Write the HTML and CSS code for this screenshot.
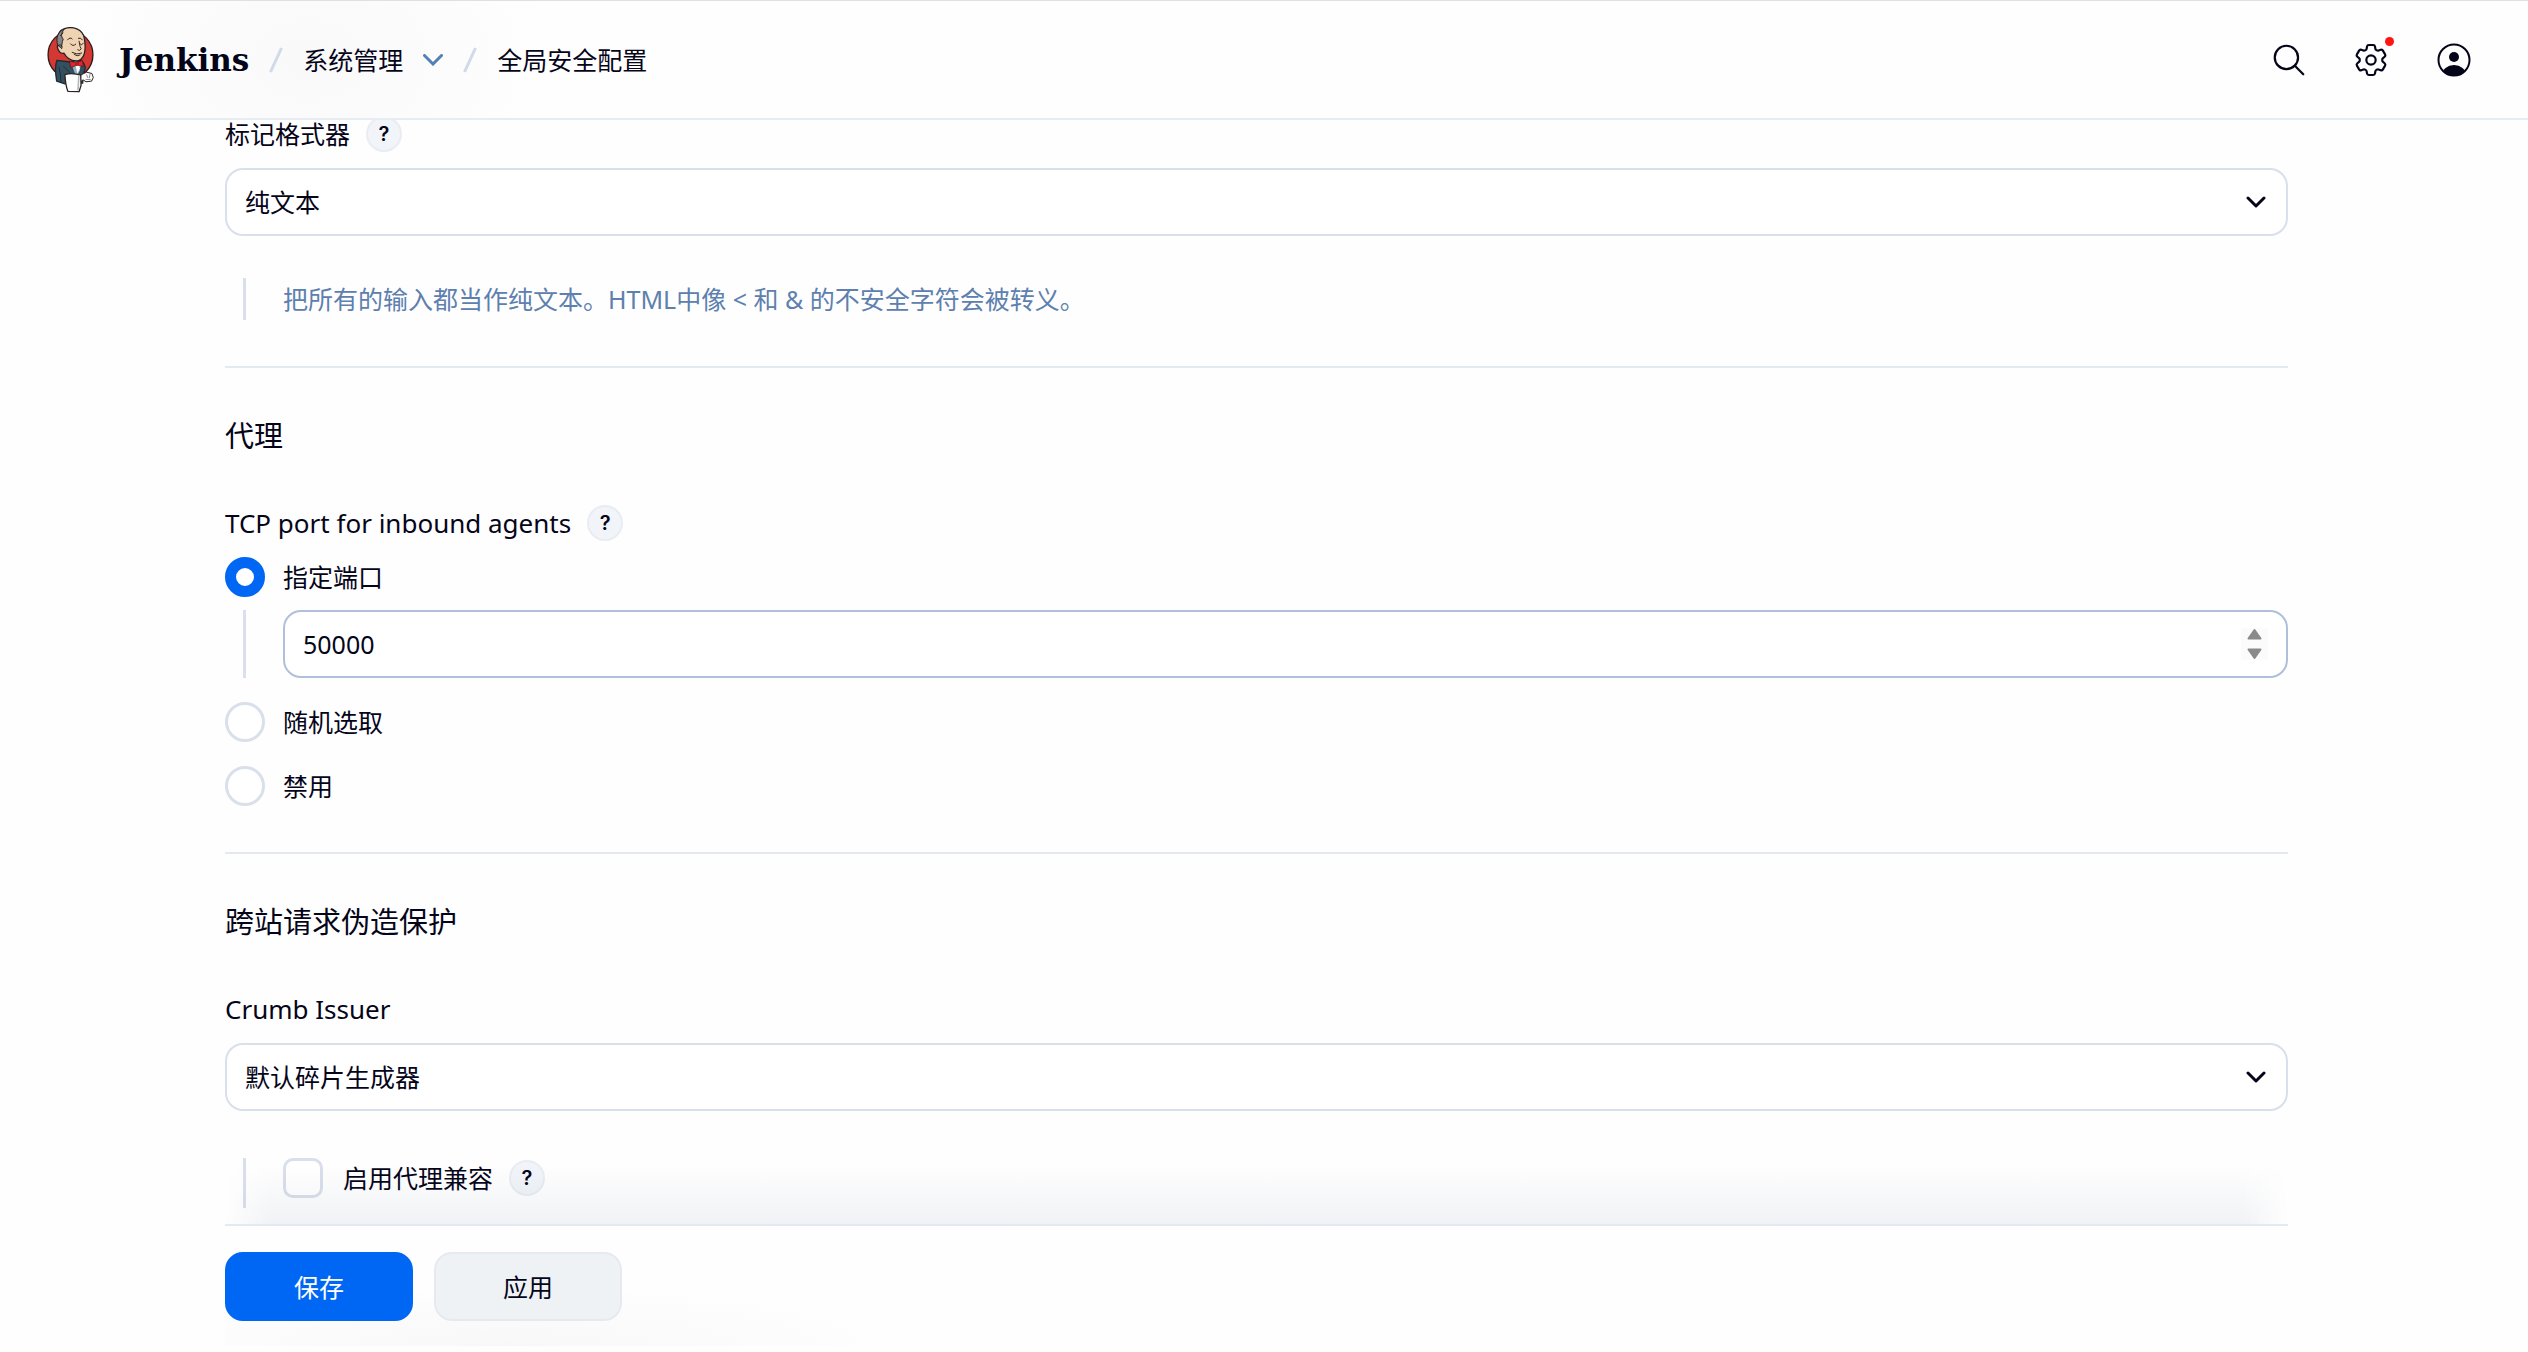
FILE: index.html
```html
<!DOCTYPE html>
<html lang="zh-CN">
<head>
<meta charset="utf-8">
<meta name="viewport" content="width=device-width, initial-scale=1">
<title>全局安全配置 - Jenkins</title>
<link rel="stylesheet" href="styles.css">
</head>
<body>
<header class="header">
  <a class="brand" href="#">
    <svg class="brand-logo" viewBox="50 36 142 200" aria-hidden="true" stroke-linecap="round" stroke-linejoin="round">
      <ellipse cx="121" cy="120" rx="68" ry="71" fill="#d33833" stroke="#2b1c1c" stroke-width="4"/>
      <path d="M80 137C74 152 75 176 79 200L104 208L158 206L160 180L166 160C163 144 153 136 143 135L120 142Z" fill="#335061" stroke="#1d2a33" stroke-width="4"/>
      <path d="M122 146L131 172L140 188L151 168L154 146L138 138Z" fill="#8fb0c6" stroke="#1d2a33" stroke-width="2"/>
      <path d="M136 150L142 178L149 162L147 148Z" fill="#fff"/>
      <path d="M85 84C77 70 84 48 101 42C127 31 159 43 163 71C166 88 166 105 163 116C160 130 149 139 138 139C121 139 107 127 101 115C91 119 83 108 81 96Z" fill="#efd4b3" stroke="#2b2222" stroke-width="4"/>
      <path d="M82 90C75 70 84 48 102 43C93 54 91 64 99 73C94 82 97 92 92 98Z" fill="#85868a" stroke="#2b2222" stroke-width="3"/>
      <path d="M84 92C92 86 99 94 94 102M91 62L98 54M112 75Q120 65 126 72M145 70Q153 67 157 75" fill="none" stroke="#2b2222" stroke-width="3"/>
      <path d="M121 87Q128 97 137 88M148 86Q154 94 160 86M147 79L150 95Q157 103 149 107L143 105M126 113Q141 122 155 115M132 119Q141 127 150 121" fill="none" stroke="#3b2922" stroke-width="3"/>
      <path d="M119 139L138 145L157 137L160 156L142 151L122 159Z" fill="#e0252b" stroke="#5a1216" stroke-width="2"/>
      <path d="M134 143L146 142L147 153L137 154Z" fill="#c3161d"/>
      <path d="M86 158Q92 181 92 202M100 155L119 174" fill="none" stroke="#1c303c" stroke-width="3"/>
      <path d="M149 184L161 177L170 173L186 177L190 189L185 200L168 202L159 196L150 204Z" fill="#fff" stroke="#2b2222" stroke-width="3"/>
      <path d="M170 181L173 189M180 180L178 190M168 195L181 195" fill="none" stroke="#555" stroke-width="2"/>
      <path d="M104 180C119 176 140 178 152 182L153 213L147 232L113 231C106 213 105 196 104 180Z" fill="#fff" stroke="#2b2222" stroke-width="4"/>
      <path d="M146 185L144 226" stroke="#b8b8b8" stroke-width="5"/>
    </svg>
    <span>Jenkins</span>
  </a>
  <nav class="crumbs" aria-label="Breadcrumb">
    <svg class="slash" viewBox="0 0 14 28" aria-hidden="true"><path d="M12.500 2L1.500 26"/></svg>
    <a class="crumb" href="#">系统管理</a>
    <button class="crumb-menu" type="button" aria-label="展开菜单"><svg viewBox="0 0 20 12" aria-hidden="true"><path d="M1.500 1.500L10 10L18.500 1.500"/></svg></button>
    <svg class="slash" viewBox="0 0 14 28" aria-hidden="true"><path d="M12.500 2L1.500 26"/></svg>
    <a class="crumb" href="#">全局安全配置</a>
  </nav>
  <div class="actions">
    <button class="action" type="button" aria-label="搜索">
      <svg viewBox="0 0 512 512" aria-hidden="true" fill="none" stroke="currentColor" stroke-width="30" stroke-linecap="round"><circle cx="221" cy="221" r="157"/><path d="M338 338L448 448"/></svg>
    </button>
    <button class="action" type="button" aria-label="系统管理">
      <svg viewBox="0 0 24 24" aria-hidden="true" fill="none" stroke="currentColor" stroke-width="1.300" stroke-linejoin="round"><path d="M9.594 3.940c.09-.542.56-.94 1.110-.94h2.593c.55 0 1.020.398 1.110.94l.213 1.281c.063.374.313.686.645.87.074.04.147.083.22.127.325.196.72.257 1.075.124l1.217-.456a1.125 1.125 0 0 1 1.370.49l1.296 2.247a1.125 1.125 0 0 1-.26 1.431l-1.003.827c-.293.241-.438.613-.43.992a7.723 7.723 0 0 1 0 .255c-.008.378.137.75.43.991l1.004.827c.424.35.534.955.26 1.430l-1.298 2.247a1.125 1.125 0 0 1-1.369.491l-1.217-.456c-.355-.133-.75-.072-1.076.124a6.470 6.470 0 0 1-.22.128c-.331.183-.581.495-.644.869l-.213 1.281c-.09.543-.56.94-1.110.94h-2.594c-.55 0-1.019-.398-1.110-.94l-.213-1.281c-.062-.374-.312-.686-.644-.87a6.520 6.520 0 0 1-.22-.127c-.325-.196-.72-.257-1.076-.124l-1.217.456a1.125 1.125 0 0 1-1.369-.49l-1.297-2.247a1.125 1.125 0 0 1 .26-1.431l1.004-.827c.292-.24.437-.613.43-.991a6.932 6.932 0 0 1 0-.255c.007-.38-.138-.751-.43-.992l-1.004-.827a1.125 1.125 0 0 1-.26-1.430l1.297-2.247a1.125 1.125 0 0 1 1.370-.491l1.216.456c.356.133.751.072 1.076-.124.072-.044.146-.086.22-.128.332-.183.582-.495.644-.869l.214-1.280Z"/><circle cx="12" cy="12" r="2.800"/></svg>
      <span class="badge"></span>
    </button>
    <button class="action" type="button" aria-label="用户">
      <svg viewBox="0 0 40 40" aria-hidden="true"><clipPath id="user-clip"><circle cx="20" cy="20" r="15.500"/></clipPath><circle cx="20" cy="20" r="15.500" fill="none" stroke="currentColor" stroke-width="2"/><circle cx="20" cy="17" r="5" fill="currentColor"/><ellipse cx="20" cy="35" rx="12" ry="10" fill="currentColor" clip-path="url(#user-clip)"/></svg>
    </button>
  </div>
</header>

<main class="main">
  <form class="form">
    <div class="label-row">
      <label for="markup">标记格式器</label>
      <button class="help" type="button" aria-label="帮助">?</button>
    </div>
    <div class="select-wrap">
      <select class="field" id="markup"><option>纯文本</option></select>
      <svg class="select-arrow" viewBox="0 0 20 12" aria-hidden="true"><path d="M2 2L10 10L18 2"/></svg>
    </div>
    <div class="nested description">把所有的输入都当作纯文本。HTML中像 &lt; 和 &amp; 的不安全字符会被转义。</div>

    <section class="section">
      <h2>代理</h2>
      <div class="label-row">
        <span id="port-label">TCP port for inbound agents</span>
        <button class="help" type="button" aria-label="帮助">?</button>
      </div>
      <div class="radios" role="radiogroup" aria-labelledby="port-label">
        <div>
          <label class="choice"><input type="radio" name="port" checked>指定端口</label>
          <div class="nested port">
            <div class="number-wrap">
              <input class="field number" type="number" value="50000" aria-label="指定端口">
              <svg class="spinner" viewBox="0 0 27 32" aria-hidden="true"><path d="M13.500 2L19.500 10.500H7.500ZM13.500 30L19.500 21.500H7.500Z"/></svg>
            </div>
          </div>
        </div>
        <label class="choice"><input type="radio" name="port">随机选取</label>
        <label class="choice"><input type="radio" name="port">禁用</label>
      </div>
    </section>

    <section class="section">
      <h2>跨站请求伪造保护</h2>
      <div class="label-row"><label for="crumb-issuer">Crumb Issuer</label></div>
      <div class="select-wrap">
        <select class="field" id="crumb-issuer"><option>默认碎片生成器</option></select>
        <svg class="select-arrow" viewBox="0 0 20 12" aria-hidden="true"><path d="M2 2L10 10L18 2"/></svg>
      </div>
      <div class="nested proxy">
        <label class="choice check"><input type="checkbox">启用代理兼容</label>
        <button class="help" type="button" aria-label="帮助">?</button>
      </div>
    </section>

    <div class="bottom-bar">
      <button class="button primary" type="submit">保存</button>
      <button class="button" type="button">应用</button>
    </div>
  </form>
</main>
</body>
</html>
```
FILE: styles.css
```css
:root {
  --text: #05051a;
  --line: #e4e8f1;
  --control: #d9dfeb;
  --blue: #0067f4;
  --page: #fefefe;
}

* {
  box-sizing: border-box;
}

body {
  margin: 0;
  background: var(--page);
  color: var(--text);
  font-family: "Noto Sans", "Noto Sans CJK SC", sans-serif;
  font-size: 25px;
  line-height: 36px;
}

button,
input,
select {
  margin: 0;
  font: inherit;
  color: inherit;
}

a {
  color: inherit;
  text-decoration: none;
}

svg {
  display: block;
  flex: none;
}

.header {
  position: relative;
  z-index: 1;
  display: flex;
  align-items: center;
  height: 120px;
  padding: 0 54px 0 47px;
  border-top: 1px solid #e0e0e0;
  border-bottom: 2px solid #e7ecf2;
  background: radial-gradient(ellipse 240px 170px at 310px 50%, #f9f9f9, var(--page));
}

.brand {
  display: flex;
  align-items: center;
  gap: 25px;
  font-family: "DejaVu Serif", serif;
  font-size: 31px;
  font-weight: 700;
}

.brand-logo {
  width: 47px;
  height: 66px;
}

.crumbs {
  display: flex;
  align-items: center;
  gap: 20px;
  margin-left: 20px;
}

.slash {
  width: 14px;
  height: 28px;
  fill: none;
  stroke: #d0dae8;
  stroke-width: 3;
}

.crumb-menu {
  padding: 0;
  border: 0;
  background: none;
}

.crumb-menu svg {
  width: 20px;
  height: 12px;
  fill: none;
  stroke: #5580b5;
  stroke-width: 3;
  stroke-linecap: round;
}

.actions {
  display: flex;
  gap: 43px;
  margin-left: auto;
}

.action {
  position: relative;
  padding: 0;
  border: 0;
  background: none;
}

.action svg {
  width: 40px;
  height: 40px;
}

.action:first-child svg {
  width: 38px;
  height: 38px;
}

.badge {
  position: absolute;
  top: -3px;
  right: -3px;
  width: 9px;
  height: 9px;
  border-radius: 50%;
  background: #ff1414;
}

.main {
  margin: -4px 240px 0 225px;
  padding-bottom: 6px;
}

.label-row {
  display: flex;
  align-items: center;
  gap: 16px;
  height: 36px;
  margin-bottom: 16px;
}

.section .label-row {
  font-size: 26px;
}

.help {
  width: 36px;
  height: 36px;
  padding: 0;
  border: 2px solid #e9edf2;
  border-radius: 50%;
  background: #f1f4f8;
  font-family: Inter, sans-serif;
  font-size: 20px;
  font-weight: 600;
  line-height: 30px;
}

.field {
  display: block;
  width: 100%;
  height: 68px;
  padding: 0 18px;
  border: 2px solid var(--control);
  border-radius: 18px;
  outline: 0;
  background: #fff;
  appearance: none;
}

.select-wrap,
.number-wrap {
  position: relative;
}

.select-arrow {
  position: absolute;
  top: 28px;
  right: 22px;
  width: 20px;
  height: 12px;
  fill: none;
  stroke: var(--text);
  stroke-width: 3;
  stroke-linecap: round;
  stroke-linejoin: round;
  pointer-events: none;
}

.number {
  border-color: #b0c0da;
  appearance: textfield;
}

.number::-webkit-inner-spin-button {
  display: none;
}

.spinner {
  position: absolute;
  top: 18px;
  right: 20px;
  width: 27px;
  height: 32px;
  background: #fbfbfb;
  fill: #8a8a8a;
  stroke: #8a8a8a;
  stroke-width: 2;
  stroke-linejoin: round;
}

.nested {
  margin-left: 18px;
  padding-left: 37px;
  border-left: 3px solid var(--control);
}

.description {
  margin-top: 42px;
  color: #5d80ae;
  line-height: 42px;
}

.section {
  margin-top: 46px;
  border-top: 2px solid var(--line);
}

h2 {
  margin: 48px 0 49px;
  font-size: 29px;
  font-weight: 400;
  line-height: 40px;
}

.radios {
  display: grid;
  gap: 24px;
}

.port {
  margin-top: 13px;
}

.choice {
  display: flex;
  align-items: center;
  gap: 18px;
  height: 40px;
}

.check {
  gap: 20px;
}

.choice input {
  flex: none;
  width: 40px;
  height: 40px;
  border: 3px solid var(--control);
  border-radius: 50%;
  background: #fff;
  appearance: none;
}

.choice input[type="radio"]:checked {
  border: 11px solid var(--blue);
}

.choice input[type="checkbox"] {
  border-radius: 10px;
}

.proxy {
  display: flex;
  gap: 16px;
  height: 50px;
  margin-top: 47px;
}

.proxy .help {
  margin-top: 2px;
}

.bottom-bar {
  position: relative;
  display: flex;
  gap: 21px;
  margin-top: 16px;
  padding: 26px 0 25px;
  border-top: 2px solid var(--line);
  background: radial-gradient(ellipse 400px 60px at 280px 100%, #f8f8f8, var(--page));
}

.bottom-bar::before {
  content: "";
  position: absolute;
  right: 0;
  bottom: calc(100% + 2px);
  left: 0;
  height: 60px;
  background: linear-gradient(transparent, rgb(70 90 130 / 7%));
  mask-image: linear-gradient(90deg, transparent, #000 45px, #000 calc(100% - 45px), transparent);
  pointer-events: none;
}

.button {
  min-width: 188px;
  height: 69px;
  padding: 0 24px;
  border: 2px solid #e6eaef;
  border-radius: 18px;
  background: #eef2f5;
}

.primary {
  border-color: var(--blue);
  background: var(--blue);
  color: #fff;
}
```
